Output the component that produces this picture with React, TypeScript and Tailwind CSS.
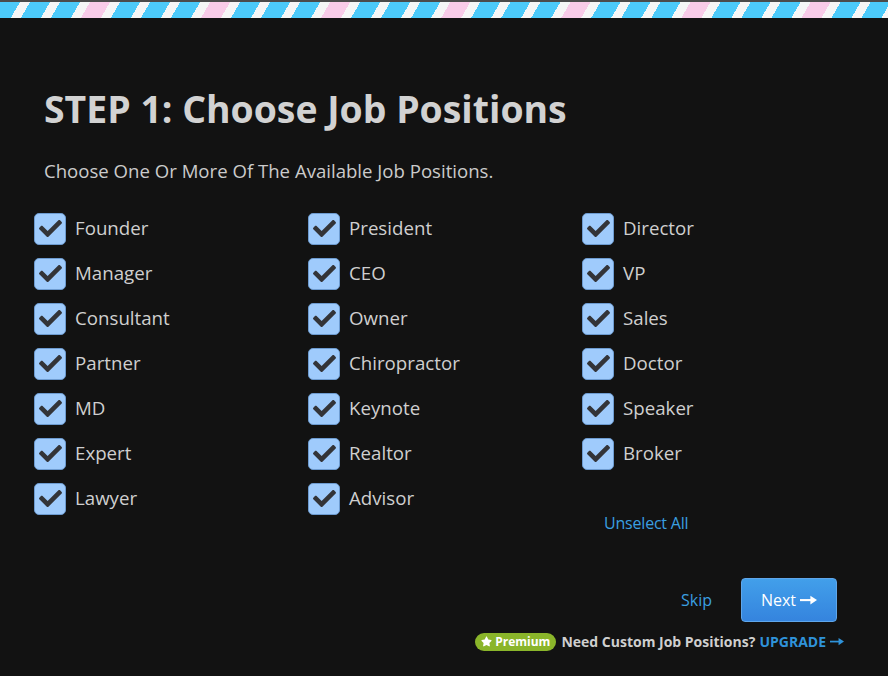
import { FaCheck, FaStar } from "react-icons/fa";

const columns = [
  ["Founder", "Manager", "Consultant", "Partner", "MD", "Expert", "Lawyer"],
  ["President", "CEO", "Owner", "Chiropractor", "Keynote", "Realtor", "Advisor"],
  ["Director", "VP", "Sales", "Doctor", "Speaker", "Broker"],
];

function Arrow({ className }: { className?: string }) {
  return (
    <svg viewBox="0 0 18 10" className={className} fill="currentColor">
      <rect x="0" y="4" width="13" height="2.2" />
      <path d="M11 0.5 L18 5.1 L11 9.7 Z" />
    </svg>
  );
}

function CheckItem({ label }: { label: string }) {
  return (
    <label className="flex h-[45px] items-center gap-[9px]">
      <span className="flex h-8 w-8 items-center justify-center rounded-[5px] border border-[#6d9bd0] bg-[#9fcbfc]">
        <FaCheck className="h-[23px] w-[23px] text-[#333438]" />
      </span>
      <span className="text-[18.7px] text-[#cfcfcf]">{label}</span>
    </label>
  );
}

export default function App() {
  return (
    <div className="min-h-[676px] w-full bg-[#121212] font-['Open_Sans',sans-serif]">
      <div className="h-[2px] bg-[#4b4b4b]" />
      <div className="h-4 bg-[repeating-linear-gradient(120deg,#4ccafa_0px,#4ccafa_17.3px,#f6f6f6_17.3px,#f6f6f6_26px,#4ccafa_26px,#4ccafa_43.3px,#f6f6f6_43.3px,#f6f6f6_52px,#4ccafa_52px,#4ccafa_69.3px,#f6f6f6_69.3px,#f6f6f6_78px,#f8cbe8_78px,#f8cbe8_95.3px,#f6f6f6_95.3px,#f6f6f6_104px)]" />

      <div className="pl-[34px] pr-[35px] pt-[67px]">
        <h1 className="pl-[10px] text-[37.4px] font-bold leading-[48px] text-[#d2d2d2]">
          STEP 1: Choose Job Positions
        </h1>
        <p className="mt-[26px] pl-[10px] text-[18.6px] leading-[24px] text-[#cbcbcb]">
          Choose One Or More Of The Available Job Positions.
        </p>

        <div className="mt-[23px] grid grid-cols-[274px_274px_274px]">
          {columns.map((col, i) => (
            <div key={i} className="flex flex-col">
              {col.map((label) => (
                <CheckItem key={label} label={label} />
              ))}
              {i === 2 && (
                <div className="mt-[37px] pl-[22px] text-[16px] leading-[20px] tracking-[-0.2px] text-[#3a9fe0]">
                  Unselect All
                </div>
              )}
            </div>
          ))}
        </div>

        <div className="mt-[45px] flex items-center justify-end gap-[29px] pr-[16px]">
          <span className="text-[16px] text-[#3a9fe0]">Skip</span>
          <button className="flex h-[44px] w-[96px] items-center justify-center gap-[4px] rounded-[4px] border border-[#5fa6ea] bg-gradient-to-b from-[#429fea] to-[#3584de] text-[16px] text-white">
            Next
            <Arrow className="h-[10px] w-[17px]" />
          </button>
        </div>

        <div className="mt-[9px] flex items-center justify-end gap-[4px] pr-[9px] text-[14px] font-bold">
          <span className="mr-[1px] flex h-[18px] items-center gap-[3px] rounded-full bg-[#8ab52a] px-[6px] text-[12px] text-white">
            <FaStar className="h-[11px] w-[11px]" />
            Premium
          </span>
          <span className="text-[#cfcfcf]">Need Custom Job Positions?</span>
          <span className="flex items-center gap-[4px] text-[#2f93da]">
            UPGRADE
            <Arrow className="h-[9px] w-[14px]" />
          </span>
        </div>
      </div>
    </div>
  );
}
